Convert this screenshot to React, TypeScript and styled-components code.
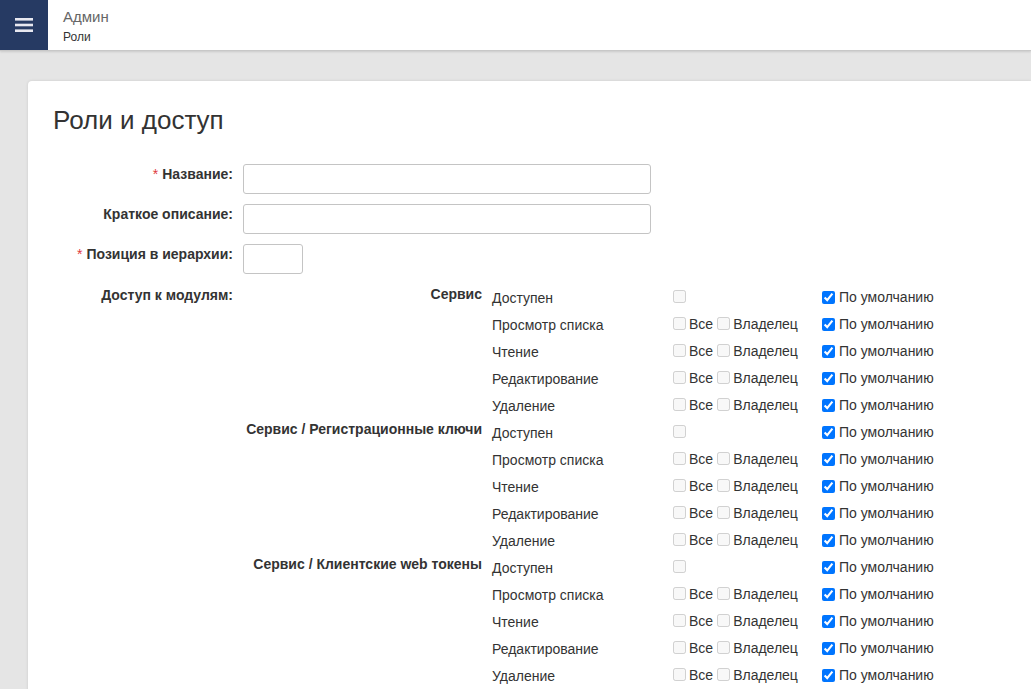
import React from 'react'
import styled, { createGlobalStyle } from 'styled-components'

const GlobalStyle = createGlobalStyle`
  html, body {
    margin     : 0;
    padding    : 0;
    background : #e5e5e5;
    overflow   : hidden;
    font-family: "Liberation Sans", Arial, sans-serif;
    font-size  : 14px;
    color      : #333;
  }
`

const Header = styled.header`
  display       : flex;
  align-items   : stretch;
  height        : 50px;
  background    : #fff;
  border-bottom : 1px solid #c8c8c8;
  box-shadow    : 0 1px 2px rgba(0, 0, 0, 0.12);
`

const MenuButton = styled.div`
  width          : 48px;
  background     : #263a63;
  display        : flex;
  align-items    : center;
  justify-content: center;
`

const Crumbs = styled.div`
  display       : flex;
  flex-direction: column;
  padding       : 8px 0 0 15px;
`

const CrumbTop = styled.div`
  font-size  : 15px;
  color      : #666;
  line-height: 18px;
`

const CrumbSub = styled.div`
  font-size  : 12px;
  color      : #333;
  line-height: 18px;
  margin-top : 2px;
`

const Card = styled.main`
  margin        : 30px 0 0 28px;
  background    : #fff;
  border-radius : 4px 0 0 0;
  box-shadow    : 0 0 3px rgba(0, 0, 0, 0.12);
  padding       : 23px 25px 40px;
  min-height    : 700px;
`

const Title = styled.h1`
  margin      : 0 0 28px;
  font-size   : 26px;
  font-weight : normal;
  line-height : 32px;
  color       : #333;
`

const FormRow = styled.div`
  display              : grid;
  grid-template-columns: 180px auto;
  column-gap           : 10px;
  margin-bottom        : 10px;
`

const Label = styled.label<{ $top?: number }>`
  text-align  : right;
  font-weight : bold;
  line-height : 20px;
  padding-top : ${p => p.$top ?? 0}px;
  color       : #333;
`

const Req = styled.span`
  color        : #e0383e;
  margin-right : 4px;
  font-weight  : normal;
`

const TextInput = styled.input<{ $w: number }>`
  box-sizing    : border-box;
  width         : ${p => p.$w}px;
  height        : 30px;
  border        : 1px solid #c4c4c4;
  border-radius : 3px;
  padding       : 4px 8px;
  font-size     : 14px;
  outline       : none;
`

const ModuleGrid = styled.div`
  display              : grid;
  grid-template-columns: 239px 191px 149px auto;
  grid-auto-rows       : 27px;
  margin-top           : 1px;
`

const ModuleName = styled.div`
  grid-column : 1;
  text-align  : right;
  font-weight : bold;
  line-height : 18px;
  white-space : nowrap;
`

const PermName = styled.div`
  grid-column : 2;
  padding-left: 10px;
  line-height : 27px;
  white-space : nowrap;
`

const Checks = styled.div`
  grid-column : 3;
  display     : flex;
  align-items : center;
  height      : 23px;
  white-space : nowrap;
`

const DefaultCell = styled.div`
  grid-column : 4;
  display     : flex;
  align-items : center;
  gap         : 1px;
  height      : 24px;
  white-space : nowrap;
`

const Box = styled.input.attrs({ type: 'checkbox' })`
  width  : 13px;
  height : 13px;
  margin : 0 3px 0 0;
`

const CheckLabel = styled.span`
  margin-right : 4px;
`

const HamburgerIcon = () => (
  <svg width="18" height="16" viewBox="0 0 18 16">
    <rect x="0" y="1" width="18" height="2.6" fill="#e8e8f0" />
    <rect x="0" y="6.7" width="18" height="2.6" fill="#e8e8f0" />
    <rect x="0" y="12.4" width="18" height="2.6" fill="#e8e8f0" />
  </svg>
)

const modules = [
  'Сервис',
  'Сервис / Регистрационные ключи',
  'Сервис / Клиентские web токены',
]

const perms = ['Доступен', 'Просмотр списка', 'Чтение', 'Редактирование', 'Удаление']

const ModuleRows: React.FC<{ name: string }> = ({ name }) => (
  <>
    {perms.map((perm, i) => (
      <React.Fragment key={perm}>
        <ModuleName>{i === 0 ? name : ''}</ModuleName>
        <PermName>{perm}</PermName>
        <Checks>
          {i === 0 ? (
            <Box disabled />
          ) : (
            <>
              <Box disabled />
              <CheckLabel>Все</CheckLabel>
              <Box disabled />
              <CheckLabel>Владелец</CheckLabel>
            </>
          )}
        </Checks>
        <DefaultCell>
          <Box defaultChecked />
          <span>По умолчанию</span>
        </DefaultCell>
      </React.Fragment>
    ))}
  </>
)

export default function App() {
  return (
    <>
      <GlobalStyle />
      <Header>
        <MenuButton>
          <HamburgerIcon />
        </MenuButton>
        <Crumbs>
          <CrumbTop>Админ</CrumbTop>
          <CrumbSub>Роли</CrumbSub>
        </Crumbs>
      </Header>
      <Card>
        <Title>Роли и доступ</Title>
        <FormRow>
          <Label><Req>*</Req>Название:</Label>
          <TextInput $w={408} />
        </FormRow>
        <FormRow>
          <Label>Краткое описание:</Label>
          <TextInput $w={408} />
        </FormRow>
        <FormRow>
          <Label><Req>*</Req>Позиция в иерархии:</Label>
          <TextInput $w={60} />
        </FormRow>
        <FormRow>
          <Label $top={1}>Доступ к модулям:</Label>
          <ModuleGrid>
            {modules.map(m => <ModuleRows key={m} name={m} />)}
          </ModuleGrid>
        </FormRow>
      </Card>
    </>
  )
}
